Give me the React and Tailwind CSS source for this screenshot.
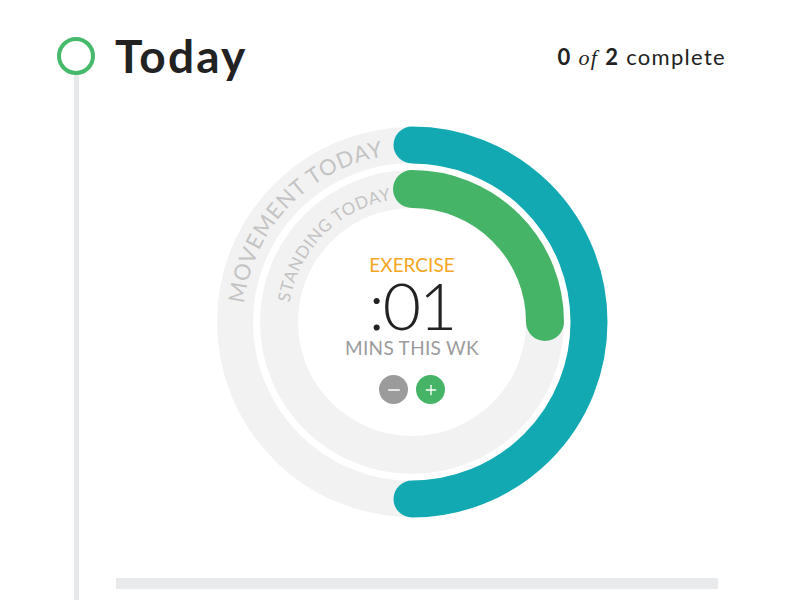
import { Minus, Plus } from "lucide-react";

function Rings() {
  return (
    <div className="relative ml-[97px] mt-[43px] h-[400px] w-[400px]">
      <svg width="400" height="400" viewBox="0 0 400 400" className="block">
        <defs>
          <path id="movementArc" d="M32.2 181.8 A168 168 0 0 1 229.2 34.6" fill="none" />
          <path id="standingArc" d="M77.7 180.6 A124 124 0 0 1 232.1 80.2" fill="none" />
        </defs>
        <circle cx="200" cy="200" r="177" fill="none" stroke="#f2f2f2" strokeWidth="36" />
        <circle cx="200" cy="200" r="133" fill="none" stroke="#f2f2f2" strokeWidth="38" />
        <text fill="#c4c4c4" fontSize="22" letterSpacing="0.9" fontFamily="Lato, sans-serif">
          <textPath href="#movementArc">MOVEMENT TODAY</textPath>
        </text>
        <text fill="#c4c4c4" fontSize="17" letterSpacing="0.6" fontFamily="Lato, sans-serif">
          <textPath href="#standingArc">STANDING TODAY</textPath>
        </text>
        <path d="M200 23 A177 177 0 0 1 200 377" fill="none" stroke="#12a9b3" strokeWidth="37" strokeLinecap="round" />
        <path d="M200 67 A133 133 0 0 1 333 200" fill="none" stroke="#46b467" strokeWidth="38" strokeLinecap="round" />
      </svg>

      <div className="absolute inset-0 flex flex-col items-center pt-[133px] font-['Lato',sans-serif]">
        <div className="text-[19px] leading-none text-[#f5a623]">EXERCISE</div>
        <div className="-mt-[2px] text-[66px] font-light leading-none tracking-[-2px] text-[#222222]">:01</div>
        <div className="text-[19px] leading-none tracking-[0.3px] text-[#9b9b9b]">MINS THIS WK</div>
        <div className="mt-[18px] flex gap-[8px]">
          <button className="flex h-[29px] w-[29px] items-center justify-center rounded-full bg-[#9b9b9b] text-white">
            <Minus size={18} strokeWidth={2} />
          </button>
          <button className="flex h-[29px] w-[29px] items-center justify-center rounded-full bg-[#46b467] text-white">
            <Plus size={16} strokeWidth={2} />
          </button>
        </div>
      </div>
    </div>
  );
}

export default function App() {
  return (
    <div className="flex h-[600px] w-[800px] overflow-hidden bg-white font-['Lato',sans-serif]">

      <div className="ml-[57px] flex w-[38px] flex-col items-center pt-[37px]">
        <div className="h-[38px] w-[38px] rounded-full border-[4px] border-[#46b96b]" />
        <div className="w-[5px] flex-1 bg-[#e8e9eb]" />
      </div>

      <div className="flex flex-1 flex-col pl-[20px] pr-[74px] pt-[33px]">

        <div className="flex items-center justify-between">
          <h1 className="text-[46px] font-bold leading-none tracking-[2.2px] text-[#222222]">Today</h1>
          <div className="mt-[3px] text-[22px] leading-none tracking-[1.3px] text-[#222222]">
            <span className="font-bold">0</span>{" "}
            <span className="font-['Liberation_Serif',serif] italic">of</span>{" "}
            <span className="font-bold">2</span> complete
          </div>
        </div>

        <Rings />

        <div className="ml-[1px] mt-[56px] h-[11px] w-[602px] bg-[#e9eaec]" />
      </div>
    </div>
  );
}
